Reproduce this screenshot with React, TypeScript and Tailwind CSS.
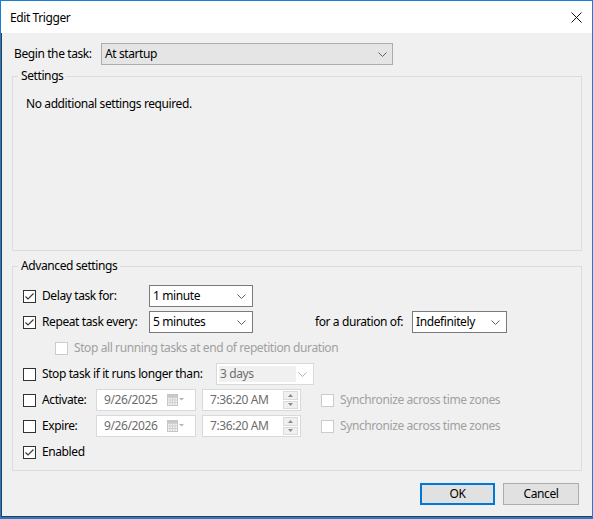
import React from "react";

function Check({ checked = false, disabled = false }: { checked?: boolean; disabled?: boolean }) {
  return (
    <span
      className={`w-[13px] h-[13px] border flex items-center justify-center shrink-0 bg-white ${
        disabled ? "border-[#cccccc]" : "border-[#333333]"
      }`}
    >
      {checked && (
        <svg width="11" height="11" viewBox="0 0 11 11">
          <path d="M1.5 5.5 L4 8 L9.5 2.5" stroke="#333333" strokeWidth="1.1" fill="none" />
        </svg>
      )}
    </span>
  );
}

function Chevron({ color = "#606060" }: { color?: string }) {
  return (
    <svg width="9" height="5" viewBox="0 0 9 5" className="shrink-0">
      <path d="M0.5 0.5 L4.5 4.5 L8.5 0.5" stroke={color} strokeWidth="1" fill="none" />
    </svg>
  );
}

function Combo({ text, w }: { text: string; w: string }) {
  return (
    <div className={`${w} h-[22px] border border-[#7a7a7a] bg-white flex items-center justify-between pl-[3px] pr-[6px]`}>
      <span>{text}</span>
      <Chevron />
    </div>
  );
}

function CalendarIcon() {
  return (
    <svg width="18" height="12" viewBox="0 0 18 12" className="shrink-0">
      <rect x="0.5" y="0.5" width="10" height="11" fill="#f4f4f4" stroke="#c4c4c4" />
      <path d="M0.5 3.5 H10.5 M0.5 6 H10.5 M0.5 8.5 H10.5 M3 3.5 V11.5 M5.5 3.5 V11.5 M8 3.5 V11.5" stroke="#d0d0d0" strokeWidth="1" />
      <rect x="0.5" y="0.5" width="10" height="2.5" fill="#c8c8c8" />
      <path d="M12 4 H17 L14.5 6.5 Z" fill="#b4b4b4" />
    </svg>
  );
}

function DateBox({ text }: { text: string }) {
  return (
    <div className="w-[100px] h-[22px] border border-[#d9d9d9] bg-white flex items-center justify-between pl-[7px] pr-[10px] text-[#6d6d6d]">
      <span>{text}</span>
      <CalendarIcon />
    </div>
  );
}

function TimeBox({ text }: { text: string }) {
  return (
    <div className="w-[99px] h-[22px] border border-[#d9d9d9] bg-white flex items-center justify-between pl-[7px] pr-[2px] text-[#6d6d6d]">
      <span>{text}</span>
      <div className="flex flex-col w-[15px] h-[18px] gap-[1px]">
        <div className="flex-1 bg-[#f0f0f0] border border-[#dadada] flex items-center justify-center">
          <svg width="5" height="3" viewBox="0 0 5 3">
            <path d="M0 3 L2.5 0 L5 3 Z" fill="#8a8a8a" />
          </svg>
        </div>
        <div className="flex-1 bg-[#f0f0f0] border border-[#dadada] flex items-center justify-center">
          <svg width="5" height="3" viewBox="0 0 5 3">
            <path d="M0 0 L2.5 3 L5 0 Z" fill="#8a8a8a" />
          </svg>
        </div>
      </div>
    </div>
  );
}

export default function App() {
  return (
    <div className="w-[593px] h-[519px] bg-[#1a7fd4] pt-[1px] px-[1px] pb-[2px] flex flex-col font-['Noto_Sans',sans-serif] text-[12px] leading-[16px] tracking-[-0.4px] text-black">
      <div className="h-[32px] bg-white flex items-center justify-between pl-[9px] pr-[10px] pt-[1px] shrink-0">
        <span>Edit Trigger</span>
        <svg width="11" height="11" viewBox="0 0 11 11">
          <path d="M0.5 0.5 L10.5 10.5 M10.5 0.5 L0.5 10.5" stroke="#111111" strokeWidth="1" />
        </svg>
      </div>
      <div className="flex-1 bg-[#f0f0f0] flex flex-col border-b border-l border-[#3b3b3b]">
        <div className="mt-[10px] pl-[12px] flex items-center">
          <span className="w-[87px]">Begin the task:</span>
          <div className="w-[292px] h-[22px] border border-[#adadad] bg-[#e5e5e5] flex items-center justify-between pl-[3px] pr-[5px]">
            <span>At startup</span>
            <Chevron />
          </div>
        </div>

        <fieldset className="mt-[3px] ml-[10px] w-[570px] h-[183px] border border-[#dcdcdc]">
          <legend className="ml-[5px] px-[3px]">Settings</legend>
          <div className="mt-[12px] pl-[13px]">No additional settings required.</div>
        </fieldset>

        <fieldset className="mt-[7px] ml-[10px] w-[570px] h-[213px] border border-[#dcdcdc]">
          <legend className="ml-[5px] px-[3px]">Advanced settings</legend>
          <div className="mt-[11px] pl-[10px] flex flex-col gap-[4px]">
            <div className="h-[22px] flex items-center">
              <div className="w-[126px] flex items-center gap-[6px]">
                <Check checked />
                <span>Delay task for:</span>
              </div>
              <Combo text="1 minute" w="w-[104px]" />
            </div>
            <div className="h-[22px] flex items-center">
              <div className="w-[126px] flex items-center gap-[6px]">
                <Check checked />
                <span>Repeat task every:</span>
              </div>
              <Combo text="5 minutes" w="w-[104px]" />
              <span className="ml-[62px] w-[97px]">for a duration of:</span>
              <Combo text="Indefinitely" w="w-[95px]" />
            </div>
            <div className="h-[22px] flex items-center pl-[32px] gap-[6px]">
              <Check disabled />
              <span className="text-[#a0a0a0]">Stop all running tasks at end of repetition duration</span>
            </div>
            <div className="h-[22px] flex items-center">
              <div className="w-[193px] flex items-center gap-[6px]">
                <Check />
                <span>Stop task if it runs longer than:</span>
              </div>
              <div className="w-[98px] h-[22px] border border-[#d9d9d9] bg-white flex items-center justify-between p-[2px] pr-[6px]">
                <span className="bg-[#f0f0f0] h-full w-[77px] flex items-center pl-[1px] text-[#6d6d6d]">3 days</span>
                <Chevron color="#b4b4b4" />
              </div>
            </div>
            <div className="h-[22px] flex items-center">
              <div className="w-[73px] flex items-center gap-[6px]">
                <Check />
                <span>Activate:</span>
              </div>
              <DateBox text="9/26/2025" />
              <div className="ml-[6px]">
                <TimeBox text="7:36:20 AM" />
              </div>
              <div className="ml-[20px] flex items-center gap-[6px]">
                <Check disabled />
                <span className="text-[#a0a0a0]">Synchronize across time zones</span>
              </div>
            </div>
            <div className="h-[22px] flex items-center">
              <div className="w-[73px] flex items-center gap-[6px]">
                <Check />
                <span>Expire:</span>
              </div>
              <DateBox text="9/26/2026" />
              <div className="ml-[6px]">
                <TimeBox text="7:36:20 AM" />
              </div>
              <div className="ml-[20px] flex items-center gap-[6px]">
                <Check disabled />
                <span className="text-[#a0a0a0]">Synchronize across time zones</span>
              </div>
            </div>
            <div className="h-[22px] flex items-center gap-[6px]">
              <Check checked />
              <span>Enabled</span>
            </div>
          </div>
        </fieldset>

        <div className="mt-[12px] flex justify-end pr-[13px] gap-[8px]">
          <button className="w-[75px] h-[22px] border-2 border-[#0078d7] bg-[#e1e1e1] flex items-center justify-center">OK</button>
          <button className="w-[76px] h-[22px] border border-[#adadad] bg-[#e1e1e1] flex items-center justify-center">Cancel</button>
        </div>
      </div>
    </div>
  );
}
